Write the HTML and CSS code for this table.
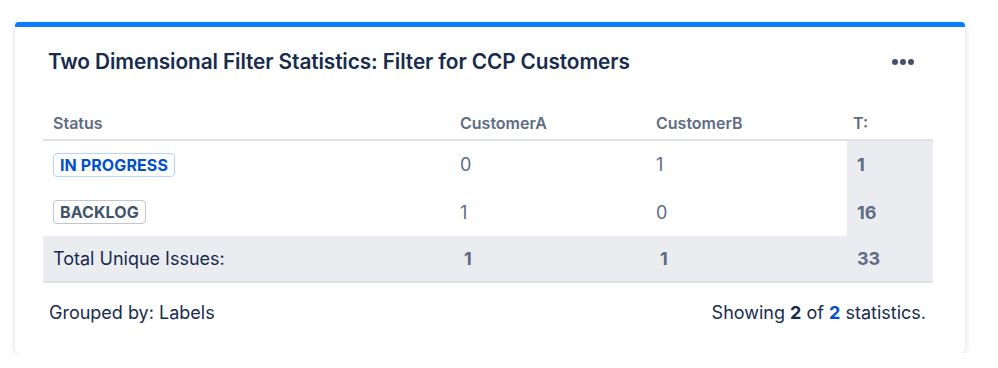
FILE: index.html
```html
<!DOCTYPE html>
<html>
<head>
<meta charset="utf-8">
<link rel="stylesheet" href="styles.css">
</head>
<body>
<div class="card">
  <div class="card-head">
    <h2 class="title">Two Dimensional Filter Statistics: Filter for CCP Customers</h2>
    <button class="more" aria-label="More actions">
      <svg width="22" height="6" viewBox="0 0 22 6"><circle cx="3" cy="3" r="3"/><circle cx="11" cy="3" r="3"/><circle cx="19" cy="3" r="3"/></svg>
    </button>
  </div>
  <table class="stats">
    <colgroup>
      <col class="c-status"><col class="c-a"><col class="c-b"><col class="c-t">
    </colgroup>
    <thead>
      <tr><th>Status</th><th>CustomerA</th><th>CustomerB</th><th class="th-t">T:</th></tr>
    </thead>
    <tbody>
      <tr>
        <td><span class="lozenge lz-blue">IN PROGRESS</span></td>
        <td class="num">0</td><td class="num">1</td><td class="tot tcol">1</td>
      </tr>
      <tr>
        <td><span class="lozenge lz-grey">BACKLOG</span></td>
        <td class="num">1</td><td class="num">0</td><td class="tot tcol">16</td>
      </tr>
      <tr class="total-row">
        <td class="total-label">Total Unique Issues:</td>
        <td class="tot">1</td><td class="tot">1</td><td class="tot tcol">33</td>
      </tr>
    </tbody>
  </table>
  <div class="foot">
    <span>Grouped by: Labels</span>
    <span>Showing <b>2</b> of <a href="#">2</a> statistics.</span>
  </div>
</div>
</body>
</html>
```
FILE: styles.css
```css
html, body { margin: 0; padding: 0; background: #fff; }
body {
  font-family: Inter, "Noto Sans", "Liberation Sans", sans-serif;
  color: #172B4D;
  padding: 22px 33px 0 15px;
}
.card {
  width: 950px;
  height: 331px;
  box-sizing: border-box;
  border-top: 5px solid #0A7AFF;
  border-radius: 4px;
  background: #fff;
  box-shadow: 0 2px 6px rgba(9, 30, 66, 0.14), 0 0 1px rgba(9, 30, 66, 0.14);
  padding: 0 32px 0 28px;
}
.card-head {
  display: flex;
  align-items: center;
  justify-content: space-between;
  height: 69px;
  padding: 0 19px 0 5px;
}
.title {
  margin: 0;
  font-size: 20.8px;
  font-weight: 600;
  letter-spacing: -0.1px;
  color: #172B4D;
}
.more {
  border: 0;
  background: none;
  padding: 0;
  display: flex;
  fill: #42526E;
}
.stats {
  width: 890px;
  border-collapse: collapse;
  table-layout: fixed;
  margin-top: 17px;
}
.c-status { width: 407px; }
.c-a { width: 196px; }
.c-b { width: 201px; }
.c-t { width: 86px; }
th {
  text-align: left;
  font-size: 16px;
  font-weight: 600;
  color: #5E6C84;
  padding: 0 10px 6px;
  height: 27px;
  box-sizing: border-box;
  border-bottom: 2px solid #DFE1E6;
}
th.th-t { padding-left: 6px; }
td {
  padding: 0 10px;
  height: 48px;
  font-size: 18px;
  color: #5E6C84;
  vertical-align: middle;
}
td.tot {
  background: #EBECF0;
  font-weight: 700;
  padding-left: 14px;
}
td.tot.tcol { padding-left: 10px; }
.stats tbody tr:first-child td { height: 47px; }
.total-row td {
  background: #EBECF0;
  height: 45px;
  border-bottom: 2px solid #DFE1E6;
}
.total-row td.total-label { color: #172B4D; }
.lozenge {
  display: inline-block;
  box-sizing: border-box;
  height: 24px;
  line-height: 22px;
  padding: 0 6px;
  border-radius: 4px;
  font-size: 16px;
  font-weight: 700;
  letter-spacing: 0.1px;
  background: #fff;
}
.lz-blue { color: #0052CC; border: 1px solid #B3D4FF; }
.lz-grey { color: #42526E; border: 1px solid #C1C7D0; }
.foot {
  display: flex;
  justify-content: space-between;
  padding: 19px 7px 0 6px;
  font-size: 18px;
  color: #172B4D;
}
.foot b { font-weight: 700; }
.foot a { color: #0052CC; text-decoration: none; font-weight: 700; }
```
